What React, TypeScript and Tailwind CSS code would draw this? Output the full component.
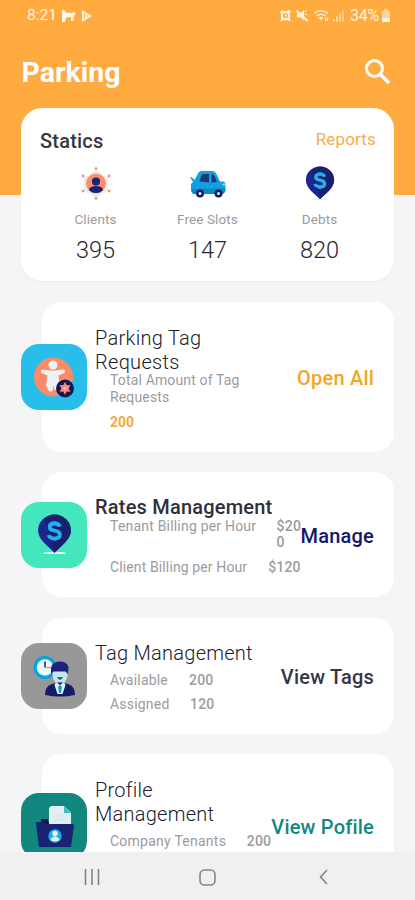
import type { ReactNode } from "react";

function StatusIcons() {
  return (
    <svg className="h-[14px] w-[66px]" viewBox="0 0 66 14" fill="#fff3e0">
      <path d="M1 2.500 3.500.8l1 1.200h4l1-1.200L12 2.500l-1 2v6l1 1.500h-2l-1-.7H4L3 12H1l1-1.500v-6z" />
      <circle cx="6.500" cy="6.600" r="2.700" fill="#ffab40" />
      <path d="M6.500 5v2h1.600" fill="none" stroke="#fff3e0" strokeWidth="1.200" />
      <path d="m18 4.200 3 .2 4-3.200v10l-3-2.700-4-.2z" />
      <path d="m17.500 1.500 11 10.500" stroke="#fff3e0" strokeWidth="2" />
      <path d="m25.500 3 2-1.500M26 5.500h2" stroke="#fff3e0" strokeWidth="1" />
      <g fill="none" stroke="#fff3e0" strokeWidth="1.500" opacity=".9">
        <path d="M35 4.300q7-5.300 14 0M37.500 7q4.500-3.500 9 0" />
      </g>
      <path d="m39.500 8.500 2.500 3 2.500-3q-2.500-1.500-5 0zM46 8.500h1.200V12H46zM48 8.500h1.200V12H48z" />
      <g opacity=".75">
        <path d="M54 10h1.800v2.500H54zM57 7.500h1.800v5H57z" />
        <path d="M60 4.500h1.800v8H60zM63 1.500h1.800v11H63z" opacity=".7" />
      </g>
    </svg>
  );
}

function ClientsIcon() {
  return (
    <svg className="mb-[2px] size-[34px]" viewBox="0 0 36 36">
      <path d="m18 4 13 7v14l-13 7-13-7V11z" fill="#e4eef0" />
      <circle cx="18" cy="17.500" r="10.500" fill="#ff8d68" />
      <circle cx="18" cy="15.300" r="4.300" fill="#172175" />
      <path d="M10.500 24q1.500-4 7.500-4t7.500 4q-3 3.500-7.500 3.500t-7.500-3.500z" fill="#172175" />
      <g fill="#f58c82">
        <circle cx="18" cy="1.800" r="1.500" /><circle cx="31.800" cy="9.500" r="1.500" />
        <circle cx="31.800" cy="25.500" r="1.500" /><circle cx="18" cy="33.300" r="1.500" />
        <circle cx="4.300" cy="25.500" r="1.500" /><circle cx="4.300" cy="9.500" r="1.500" />
      </g>
    </svg>
  );
}

function CarIcon() {
  return (
    <svg className="size-9" viewBox="0 0 36 36">
      <path d="M0 10.500q0-1.500 3.500 1l2 3-2 1z" fill="#0ba8df" />
      <path d="M4 14 7.500 7.500Q8.500 4 12 4h10q3 0 4.500 3l3.500 7.500h4q1.500 1 1.500 4V24L33 27H3l-2-3v-7z" fill="#139fe0" />
      <path d="m9.500 14.500 1.500-5.500q.5-2 2.500-2h5.500v8.500zM21.500 7q2 0 3 2l2.500 6-5.500.5z" fill="#173a79" />
      <path d="M1.500 22 35 21v4l-2 2H3z" fill="#078bc8" />
      <path d="M32.500 16.500H35v2h-2.500z" fill="#7fdcf5" />
      <circle cx="10" cy="26.500" r="4" fill="#14205d" /><circle cx="28.500" cy="26.500" r="4" fill="#14205d" />
      <circle cx="10" cy="26.500" r="1.500" fill="#eef" /><circle cx="28.500" cy="26.500" r="1.500" fill="#eef" />
    </svg>
  );
}

function DebtPin({ className }: { className: string }) {
  return (
    <svg className={className} viewBox="0 0 36 42" preserveAspectRatio="none">
      <path d="M8 39h20l2 2H6z" fill="#d9f7f4" />
      <path d="M18 40C14 35 1 27 1 17a17 16.500 0 0 1 34 0C35 27 22 35 18 40z" fill="#1b2590" />
      <path d="M18 .5A17 16.500 0 0 1 35 17C35 27 22 35 18 40L8 6q4-5.500 10-5.500z" fill="#182060" opacity=".7" />
      <path d="M23.500 13q-1-3.200-5.500-3.200-5 0-5 3.600 0 3 5 3.600 5.500.8 5.500 4.200 0 3.800-5.500 3.800-5 0-6-3.500M18 7.500V10m0 15v2.500" fill="none" stroke="#22b0ef" strokeWidth="4" />
    </svg>
  );
}

function ChildIcon() {
  return (
    <svg className="size-[42px]" viewBox="0 0 42 42">
      <circle cx="20.500" cy="21" r="19.500" fill="#ff8b66" />
      <circle cx="20" cy="9" r="4.500" fill="#edf3f4" />
      <path d="M10.500 13.500 17 14.500h6l6.500-1q3 0 2.500 2.500-.5 1.500-3 2l-3.500 1.500 1 9.500-1.500 5h-3.500L20.500 29l-1 6.500H16L13 29l1.500-9.500L11 18q-2.500-.5-3-2-.5-2.500 2.500-2.500z" fill="#edf3f4" />
      <circle cx="32" cy="32.500" r="9" fill="#111953" />
      <path d="m32 26 1.800 3.200 3.700-.2-1.900 3.400 1.900 3.400-3.700-.2L32 38.800l-1.800-3.200-3.700.2 1.900-3.400-1.900-3.400 3.700.2z" fill="#ff8b76" />
      <circle cx="32" cy="32.400" r="1.500" fill="#ffc0a9" />
    </svg>
  );
}

function AgentIcon() {
  return (
    <svg className="size-[42px]" viewBox="0 0 42 42">
      <circle cx="12" cy="12.500" r="11.500" fill="#05a5df" />
      <circle cx="12" cy="12.500" r="8.300" fill="#eef8fd" />
      <path d="M12 6.500v6" fill="none" stroke="#152c70" strokeWidth="1.600" />
      <path d="M12 12.500h6" stroke="#f58470" strokeWidth="1.400" />
      <path d="M19.500 13h15v8q-1 7-7.500 8-6.500-1-7.500-8z" fill="#c7e5ef" />
      <path d="M18 19v-6q1-6.500 9-6.500 7 0 8.500 5.500l-.5 7-2.500-2.500h-12z" fill="#1b247a" />
      <path d="M24 22h6q-1 3-3 3t-3-3z" fill="#286aa1" />
      <path d="M12 40q0-9 7-11l5-1.500h6l5 1.500q7 2 7 11-14 3-30 0z" fill="#151d66" />
      <path d="m23 27 4 3 4-3 1.500 3L29.500 39h-5L21.500 30z" fill="#e7f5fb" />
      <path d="m27 30 2 2-1 6h-2l-1-6z" fill="#169ed0" />
    </svg>
  );
}

function FolderIcon() {
  return (
    <svg className="size-[42px]" viewBox="0 0 42 42">
      <path d="M8 14h7v3h18v8H8z" fill="#101945" />
      <path d="M18 1h13l7 6.500V23H16V3z" fill="#e2eef3" />
      <path d="M31 1v7h7z" fill="#33bfd1" />
      <path d="M20 11h11m-11 4h14" stroke="#d0e4ea" strokeWidth="1" />
      <path d="M4 17q-1.500 0-1 2l3 23h32l3-21q.3-2-2-2H17l-3 1-3-3z" fill="#192374" />
      <circle cx="22" cy="31" r="6.700" fill="#15acf0" />
      <circle cx="22" cy="28.500" r="2.700" fill="#e7f7fc" />
      <path d="M17.500 35q1-3.500 4.500-3.500t4.500 3.500q-4.500 3-9 0z" fill="#e7f7fc" />
    </svg>
  );
}

function Stat({ icon, label, value }: { icon: ReactNode; label: string; value: string }) {
  return (
    <div className="flex w-28 flex-col items-center">
      <div className="flex h-10 items-end">{icon}</div>
      <div className="mt-[6px] text-[13.500px] leading-5 tracking-[0.1px] text-[#9b9b9e]">{label}</div>
      <div className="mt-[6px] text-[23.500px] leading-[30px] font-light text-[#282832]">{value}</div>
    </div>
  );
}

function Card({ size, tile, icon, action, actionColor, children }: {
  size: string; tile: string; icon: ReactNode; action: string; actionColor: string; children: ReactNode;
}) {
  return (
    <section className={`ml-[42px] mr-[21px] flex shrink-0 rounded-[20px] bg-white ${size}`}>
      <div className={`-ml-[21px] flex size-[66px] shrink-0 items-center justify-center self-center rounded-[18px] ${tile}`}>{icon}</div>
      <div className="ml-2 min-w-0 flex-1">{children}</div>
      <div className={`mr-5 mt-[2px] self-center text-[20px] leading-6 font-medium tracking-[0.2px] whitespace-nowrap ${actionColor}`}>{action}</div>
    </section>
  );
}

const title = "text-[20px] leading-[23.500px]";
const row = "ml-[15px] flex text-[14px] leading-[16.500px] text-[#9b9b9e]";

export default function App() {
  return (
    <div className="flex h-[900px] w-[415px] flex-col overflow-hidden bg-[#f5f5f8] font-['Roboto','Liberation_Sans',sans-serif]">
      <main className="flex min-h-0 flex-1 flex-col overflow-hidden">
        <header className="h-[195px] shrink-0 bg-[#ffab40] text-white">
          <div className="flex h-8 items-center pl-[27px] pr-6 text-[16px] text-[#fff3e0]">
            <span className="w-[34px] text-[15.500px]">8:21</span>
            <svg className="h-[14px] w-8" viewBox="0 0 32 14" fill="#fff5e8">
              <path d="M1 2 3 .5l2 3 5 .5 3-1 2 2-2 1.500-.5 5.500H10V8L5 8.500 4 13H1z" />
              <path d="m21 1 10 6-10 6z" /><path d="m23 4 5 3-5 3z" fill="#ffab40" /><path d="m24 5 3 2-3 2z" />
            </svg>
            <span className="ml-auto"><StatusIcons /></span>
            <span className="ml-[5px] tracking-[-0.2px]">34%</span>
            <svg className="ml-[2px] h-[14px] w-[10px]" viewBox="0 0 10 14" fill="#fff5e8">
              <path d="M3 0h4v2h2v7H1V2h2z" opacity=".55" /><path d="M1 9h8v4H1z" />
            </svg>
          </div>
          <div className="flex h-[80px] items-center justify-between pl-[21.500px] pr-6">
            <h1 className="mt-[2px] text-[28.500px] leading-8 font-bold">Parking</h1>
            <svg className="mb-[2px] size-[27px]" viewBox="0 0 27 27" fill="none" stroke="white" strokeWidth="3">
              <circle cx="10.500" cy="10.500" r="8" /><path d="m16.500 16.500 8.500 8.500" strokeWidth="3.600" />
            </svg>
          </div>
        </header>

        <section className="relative mx-[21px] -mt-[87px] h-[173px] shrink-0 rounded-[21px] bg-white shadow-[0_1px_2px_rgba(0,0,0,0.05)]">
          <div className="flex h-[55px] items-start justify-between px-[18px] pt-5">
            <h2 className="ml-[1px] mt-[1px] text-[20px] leading-6 font-medium tracking-[0.2px] text-[#37373f]">Statics</h2>
            <span className="text-[17px] leading-[22px] tracking-[0.15px] text-[#f6ae4e]">Reports</span>
          </div>
          <div className="ml-[18.500px] flex">
            <Stat icon={<ClientsIcon />} label="Clients" value="395" />
            <Stat icon={<CarIcon />} label="Free Slots" value="147" />
            <Stat icon={<DebtPin className="mb-[2px] h-[35px] w-[30px]" />} label="Debts" value="820" />
          </div>
        </section>

        <div className="mt-[21px] flex flex-col gap-5">
          <Card size="h-[150px]" tile="bg-[#29bdea]" icon={<ChildIcon />} action="Open All" actionColor="text-[#f5a425]">
            <h3 className={`mt-[25px] font-light tracking-[0.3px] text-[#20202a] ${title}`}>Parking Tag<br />Requests</h3>
            <div className={`-mt-[2px] tracking-[0.15px] ${row}`}><span>Total Amount of Tag<br />Requests</span></div>
            <div className="ml-[15px] mt-[9px] text-[14px] leading-[17px] font-bold text-[#f5a940]">200</div>
          </Card>
          <Card size="h-[125px]" tile="bg-[#43e6bd]" icon={<DebtPin className="h-[41px] w-[35px]" />} action="Manage" actionColor="text-[#15166b]">
            <h3 className={`mt-[24px] whitespace-nowrap font-medium tracking-[0.2px] text-[#30303a] ${title}`}>Rates Management</h3>
            <div className={`-mt-[2px] justify-between tracking-[0.2px] ${row}`}><span className="whitespace-nowrap">Tenant Billing per Hour</span><span className="w-[24px] font-medium">$20<br />0</span></div>
            <div className={`mt-2 justify-between tracking-[0.12px] ${row}`}><span className="whitespace-nowrap">Client Billing per Hour</span><span className="font-medium">$120</span></div>
          </Card>
          <Card size="mt-[1px] h-[116px]" tile="bg-[#989898]" icon={<AgentIcon />} action="View Tags" actionColor="text-[#343644]">
            <h3 className={`mt-[24px] whitespace-nowrap font-light tracking-[0.25px] text-[#20202a] ${title}`}>Tag Management</h3>
            <div className={`mt-[6px] tracking-[0.2px] ${row}`}><span className="w-[79px]">Available</span><span className="font-medium">200</span></div>
            <div className={`mt-2 tracking-[0.2px] ${row}`}><span className="w-20">Assigned</span><span className="font-medium">120</span></div>
          </Card>
          <Card size="h-[143px]" tile="bg-[#12877d]" icon={<FolderIcon />} action="View Pofile" actionColor="text-[#12877d]">
            <h3 className={`mt-[25px] font-light tracking-[0.25px] text-[#20202a] ${title}`}>Profile<br />Management</h3>
            <div className={`mt-[7px] justify-between tracking-[0.25px] ${row}`}><span className="whitespace-nowrap">Company Tenants</span><span className="font-medium">200</span></div>
          </Card>
        </div>
      </main>
      <nav className="flex h-12 shrink-0 items-center bg-[#f0f0f0] pt-[2px]">
        <svg className="ml-[84px] h-4 w-4" viewBox="0 0 16 16" stroke="#858585" strokeWidth="1.600"><path d="M1.500 0v16M8 0v16M14.500 0v16" /></svg>
        <svg className="ml-[99px] size-[17px]" viewBox="0 0 17 17" fill="none" stroke="#858585" strokeWidth="1.600"><rect x="1" y="1" width="15" height="15" rx="4.500" /></svg>
        <svg className="ml-[103px] h-4 w-[9px]" viewBox="0 0 9 16" fill="none" stroke="#858585" strokeWidth="1.600"><path d="M8 1 1.500 8 8 15" /></svg>
      </nav>
    </div>
  );
}
